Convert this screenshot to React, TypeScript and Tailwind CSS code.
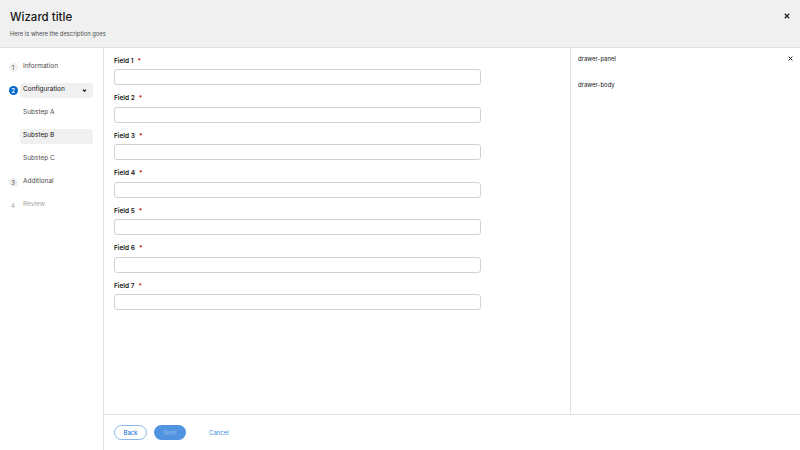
import React from "react";

const font = { fontFamily: "Inter, 'Noto Sans', sans-serif" };

const fields = ["Field 1", "Field 2", "Field 3", "Field 4", "Field 5", "Field 6", "Field 7"];

function CloseIcon({ className }: { className?: string }) {
    return (
        <svg viewBox="0 0 10 10" className={className} fill="none" stroke="currentColor" strokeWidth={2} strokeLinecap="square">
            <path d="M2 2 L8 8 M8 2 L2 8" />
        </svg>
    );
}

function NavStep({ num, label, state }: { num: string; label: string; state: "done" | "current" | "todo" | "disabled" }) {
    return (
        <div className="flex items-center h-[15px] mb-[8px]">
            <div className="w-[20px] flex justify-center pl-[6px]">
                {state === "current" ? (
                    <span className="w-[9px] h-[9px] rounded-full bg-[#0066cc] text-white text-[6px] font-semibold flex items-center justify-center">{num}</span>
                ) : (
                    <span className={`w-[9px] h-[9px] rounded-full flex items-center justify-center text-[6px] ${state === "disabled" ? "text-[#a3a3a3]" : "bg-[#f0f0f0] text-[#4d4d4d]"}`}>{num}</span>
                )}
            </div>
            {state === "current" ? (
                <div className="w-[73px] h-[15px] rounded-[3px] bg-[#f0f0f0] flex items-center justify-between pl-[3px] pr-[6px]">
                    <span className="text-[6.5px] text-[#151515]">{label}</span>
                    <svg viewBox="0 0 10 10" className="w-[5px] h-[5px] text-[#151515]" fill="none" stroke="currentColor" strokeWidth={2.2}>
                        <path d="M2 3.5 L5 6.5 L8 3.5" />
                    </svg>
                </div>
            ) : (
                <span className={`pl-[3px] text-[6.5px] ${state === "disabled" ? "text-[#a3a3a3]" : "text-[#4d4d4d]"}`}>{label}</span>
            )}
        </div>
    );
}

function SubStep({ label, active }: { label: string; active?: boolean }) {
    return (
        <div className="flex items-center h-[15px] mb-[8px] pl-[20px]">
            <div className={`w-[73px] h-[15px] rounded-[3px] flex items-center pl-[3px] ${active ? "bg-[#f0f0f0] text-[#151515]" : "text-[#4d4d4d]"}`}>
                <span className="text-[6.5px]">{label}</span>
            </div>
        </div>
    );
}

export default function App() {
    return (
        <div className="w-[800px] h-[450px] flex flex-col bg-white overflow-hidden" style={font}>
            {/* Header */}
            <div className="h-[48px] bg-[#f0f0f0] border-b border-[#e0e0e0] flex justify-between pl-[10px] pr-[10px] shrink-0">
                <div className="pt-[10px]">
                    <h1 className="text-[11.5px] leading-[14px] font-medium text-[#151515]">Wizard title</h1>
                    <p className="mt-[6px] text-[5.8px] text-[#4d4d4d]">Here is where the description goes</p>
                </div>
                <div className="pt-[13px]">
                    <CloseIcon className="w-[6px] h-[6px] text-[#151515]" />
                </div>
            </div>

            {/* Body */}
            <div className="flex flex-1 min-h-0">
                {/* Nav */}
                <div className="w-[104px] border-r border-[#e0e0e0] pt-[11.5px] shrink-0">
                    <NavStep num="1" label="Information" state="done" />
                    <NavStep num="2" label="Configuration" state="current" />
                    <SubStep label="Substep A" />
                    <SubStep label="Substep B" active />
                    <SubStep label="Substep C" />
                    <NavStep num="3" label="Additional" state="done" />
                    <NavStep num="4" label="Review" state="disabled" />
                </div>

                <div className="flex-1 flex flex-col min-w-0">
                    <div className="flex flex-1 min-h-0">
                        {/* Form */}
                        <div className="flex-1 pl-[10px] pt-[9px]">
                            {fields.map((f, i) => (
                                <div key={f} className={i === 0 ? "" : "mt-[9.5px]"}>
                                    <div className="h-[9px] flex items-center text-[6.5px] font-semibold text-[#151515]">
                                        {f}
                                        <span className="ml-[4px] text-[#c9190b]">*</span>
                                    </div>
                                    <div className="mt-[3px] w-[367px] h-[16px] rounded-[3px] border border-[#d2d2d2] bg-white" />
                                </div>
                            ))}
                        </div>

                        {/* Drawer */}
                        <div className="w-[230px] border-l border-[#e0e0e0] shrink-0 pl-[7px] pr-[7px] pt-[6px]">
                            <div className="flex justify-between items-center h-[9px]">
                                <span className="text-[6px] text-[#151515]">drawer-panel</span>
                                <CloseIcon className="w-[5px] h-[5px] text-[#151515]" />
                            </div>
                            <div className="mt-[17px] text-[6px] text-[#151515]">drawer-body</div>
                        </div>
                    </div>

                    {/* Footer */}
                    <div className="h-[36px] border-t border-[#e0e0e0] flex items-center pl-[10px] gap-[7px] shrink-0">
                        <button className="h-[15px] w-[33px] rounded-full border border-[#8cb7ea] text-[6px] text-[#0066cc]">Back</button>
                        <button className="h-[15px] w-[32px] rounded-full bg-[#4f93e1] text-[6px] text-[#8fbcef]">Next</button>
                        <button className="ml-[16px] text-[6px] text-[#3d8ce3]">Cancel</button>
                    </div>
                </div>
            </div>
        </div>
    );
}
